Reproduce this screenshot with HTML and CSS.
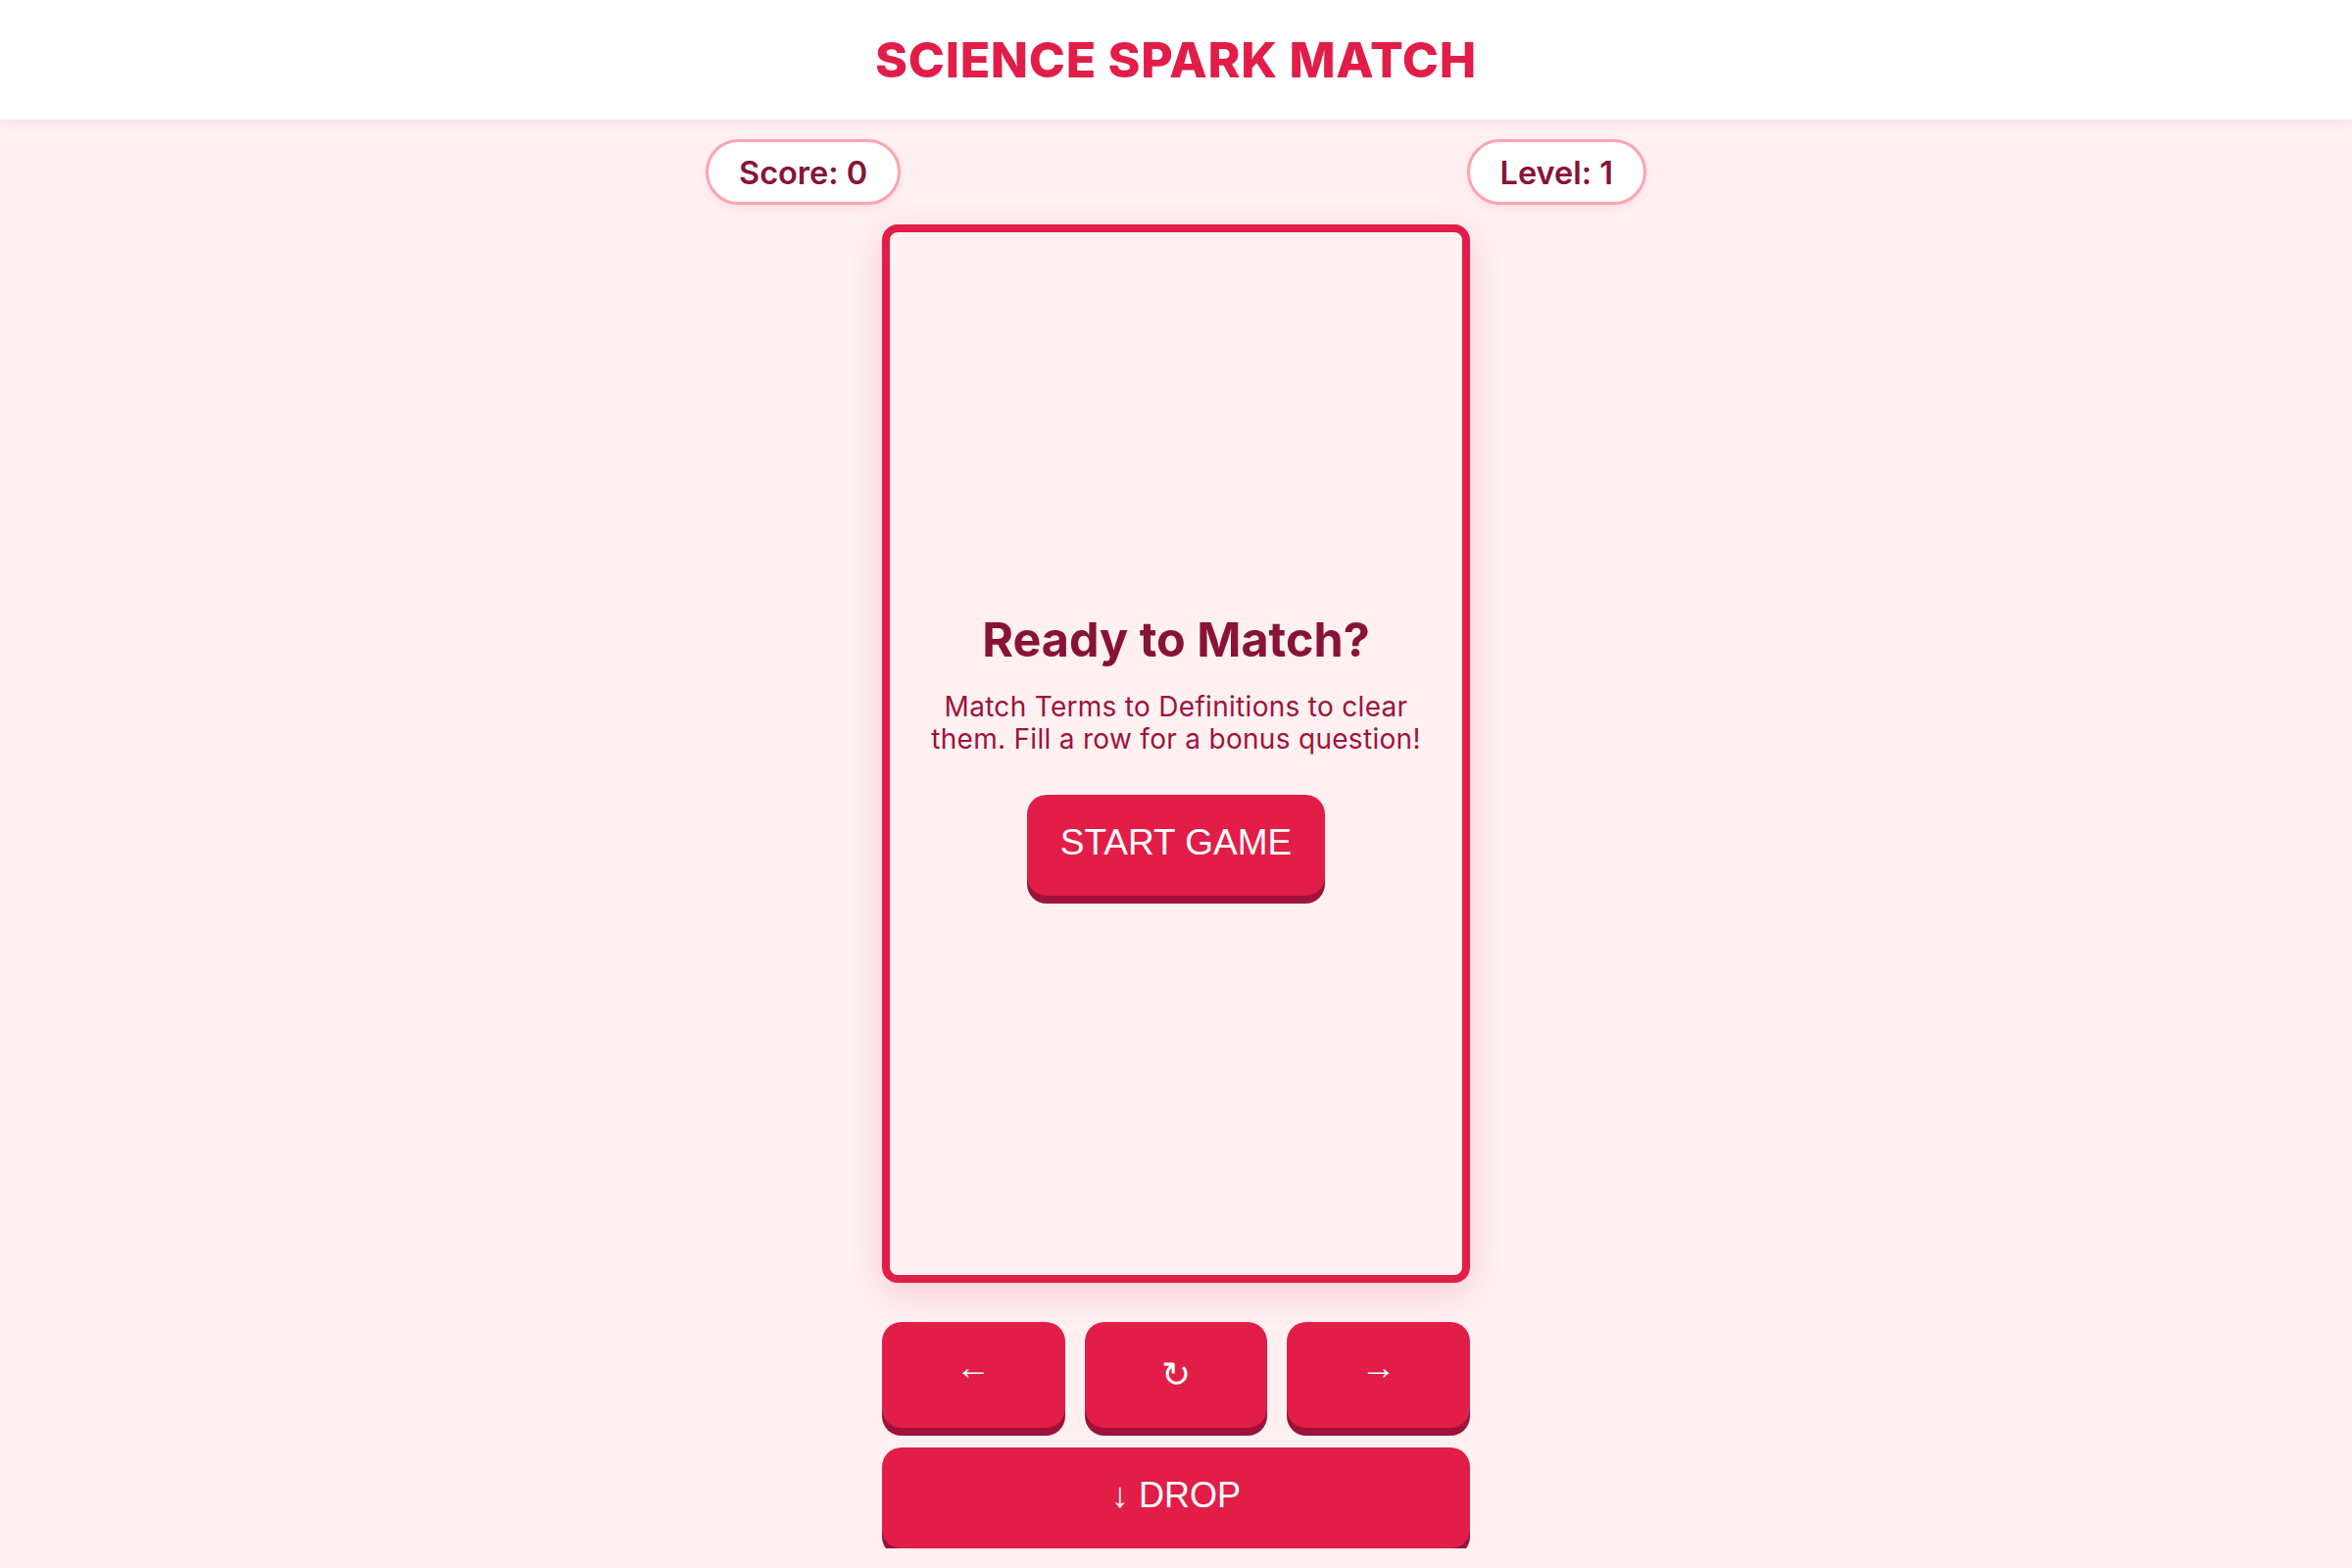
FILE: index.html
```html
<!DOCTYPE html>
<html lang="en">
<head>
<meta charset="utf-8">
<title>Science Spark Match</title>
<link rel="stylesheet" href="styles.css">
</head>
<body>
<header class="topbar">
  <h1 class="title">SCIENCE SPARK MATCH</h1>
</header>
<main class="game">
  <div class="stats">
    <div class="pill">Score: 0</div>
    <div class="pill">Level: 1</div>
  </div>
  <div class="board">
    <div class="overlay">
      <h2 class="overlay-title">Ready to Match?</h2>
      <p class="overlay-text">Match Terms to Definitions to clear them. Fill a row for a bonus question!</p>
      <button class="btn start-btn">START GAME</button>
    </div>
  </div>
  <div class="controls">
    <button class="btn ctrl-btn ctrl-btn--arrow">←</button>
    <button class="btn ctrl-btn">↻</button>
    <button class="btn ctrl-btn ctrl-btn--arrow">→</button>
    <button class="btn drop-btn">↓ DROP</button>
  </div>
</main>
</body>
</html>
```

FILE: styles.css
```css
* {
  box-sizing: border-box;
}

html, body {
  margin: 0;
  padding: 0;
}

body {
  background: #fff1f2;
  font-family: "Inter", "Noto Sans", sans-serif;
  color: #881337;
  overflow: hidden;
}

/* top title bar */
.topbar {
  height: 122px;
  background: #ffffff;
  display: flex;
  align-items: center;
  justify-content: center;
  box-shadow: 0 2px 16px rgba(225, 29, 72, 0.10);
  position: relative;
  z-index: 1;
}

.title {
  margin: 0;
  font-size: 50px;
  font-weight: 800;
  letter-spacing: 0.7px;
  color: #e11d48;
  line-height: 1.2;
}

/* game column */
.game {
  display: flex;
  flex-direction: column;
  align-items: center;
  padding-top: 20px;
}

.stats {
  width: 960px;
  display: flex;
  justify-content: space-between;
  margin-bottom: 20px;
}

.pill {
  background: #ffffff;
  border: 3px solid #fda4af;
  border-radius: 999px;
  padding: 11px 31px 9px;
  font-size: 32.5px;
  line-height: 41px;
  font-weight: 600;
  color: #881337;
  box-shadow: 0 4px 10px rgba(225, 29, 72, 0.08);
}

/* play field */
.board {
  width: 600px;
  height: 1080px;
  border: 8px solid #e11d48;
  border-radius: 16px;
  background: #fff1f2;
  box-shadow: 0 10px 40px rgba(225, 29, 72, 0.18);
  display: flex;
  align-items: center;
  justify-content: center;
  margin-bottom: 40px;
}

.overlay {
  display: flex;
  flex-direction: column;
  align-items: center;
  text-align: center;
  padding: 0 30px;
}

.overlay-title {
  margin: 0;
  font-size: 48.5px;
  line-height: 58px;
  font-weight: 700;
  color: #881337;
}

.overlay-text {
  margin: 23px 0 40px;
  font-size: 28px;
  line-height: 33px;
  letter-spacing: 0.3px;
  color: #9f1239;
}

/* chunky buttons */
.btn {
  border: none;
  border-radius: 20px;
  background: #e11d48;
  color: #ffffff;
  font-family: "Liberation Sans", Arial, sans-serif;
  font-size: 36px;
  box-shadow: 0 8px 0 #9f1239;
  cursor: pointer;
  padding: 0;
}

.start-btn {
  height: 103px;
  padding: 0 34px 5px;
  font-size: 37px;
}

.controls {
  width: 600px;
  display: grid;
  grid-template-columns: repeat(3, 1fr);
  gap: 20px;
}

.ctrl-btn {
  height: 108px;
}

.ctrl-btn--arrow {
  padding-bottom: 16px;
}

.drop-btn {
  grid-column: 1 / -1;
  height: 103px;
  padding-bottom: 5px;
}
```
